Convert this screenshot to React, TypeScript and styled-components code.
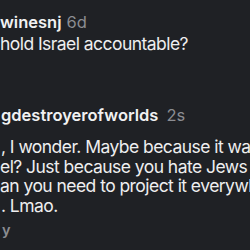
import React from "react";
import styled, { createGlobalStyle } from "styled-components";

const Global = createGlobalStyle`
  html, body { margin: 0; padding: 0; background: #1f2125; }
  #root { width: 250px; height: 250px; }
`;

const Screen = styled.div`
  width: 250px;
  height: 250px;
  overflow: hidden;
  background: #1f2125;
  font-family: Inter, "Noto Sans", sans-serif;
  color: #eeeeef;
  display: flex;
  flex-direction: column;
`;

const Comment = styled.div<{ $top: number }>`
  display: flex;
  flex-direction: column;
  padding-top: ${(p) => p.$top}px;
`;

const Header = styled.div<{ $indent: number; $gap: number }>`
  display: flex;
  align-items: baseline;
  gap: ${(p) => p.$gap}px;
  white-space: nowrap;
  height: 20px;
  line-height: 20px;
  margin-left: ${(p) => p.$indent}px;
`;

const Username = styled.span`
  font-size: 16.5px;
  font-weight: 600;
  color: #f1f1f2;
`;

const Time = styled.span`
  font-size: 16.5px;
  font-weight: 400;
  color: #8b8d92;
`;

const Body = styled.div<{ $gap: number; $lh: number }>`
  margin-top: ${(p) => p.$gap}px;
  font-size: 17.5px;
  letter-spacing: -0.55px;
  line-height: ${(p) => p.$lh}px;
  white-space: nowrap;
  color: #eeeeef;
`;

const Line = styled.div<{ $indent: number }>`
  margin-left: ${(p) => p.$indent}px;
`;

const Reply = styled.div<{ $indent: number }>`
  margin-top: 6px;
  margin-left: ${(p) => p.$indent}px;
  font-size: 14.5px;
  line-height: 18px;
  font-weight: 600;
  color: #8b8d92;
`;

export default function App() {
  return (
    <>
      <Global />
      <Screen>
        <Comment $top={12}>
          <Header $indent={0} $gap={5}>
            <Username>winesnj</Username>
            <Time>6d</Time>
          </Header>
          <Body $gap={1} $lh={22}>
            <Line $indent={0}>hold Israel accountable?</Line>
          </Body>
        </Comment>
        <Comment $top={50}>
          <Header $indent={1} $gap={8}>
            <Username>gdestroyerofworlds</Username>
            <Time>2s</Time>
          </Header>
          <Body $gap={12} $lh={19.5}>
            <Line $indent={1}>, I wonder. Maybe because it was</Line>
            <Line $indent={0}>el? Just because you hate Jews</Line>
            <Line $indent={0}>an you need to project it everywhere</Line>
            <Line $indent={1}>. Lmao.</Line>
          </Body>
          <Reply $indent={2}>y</Reply>
        </Comment>
      </Screen>
    </>
  );
}
